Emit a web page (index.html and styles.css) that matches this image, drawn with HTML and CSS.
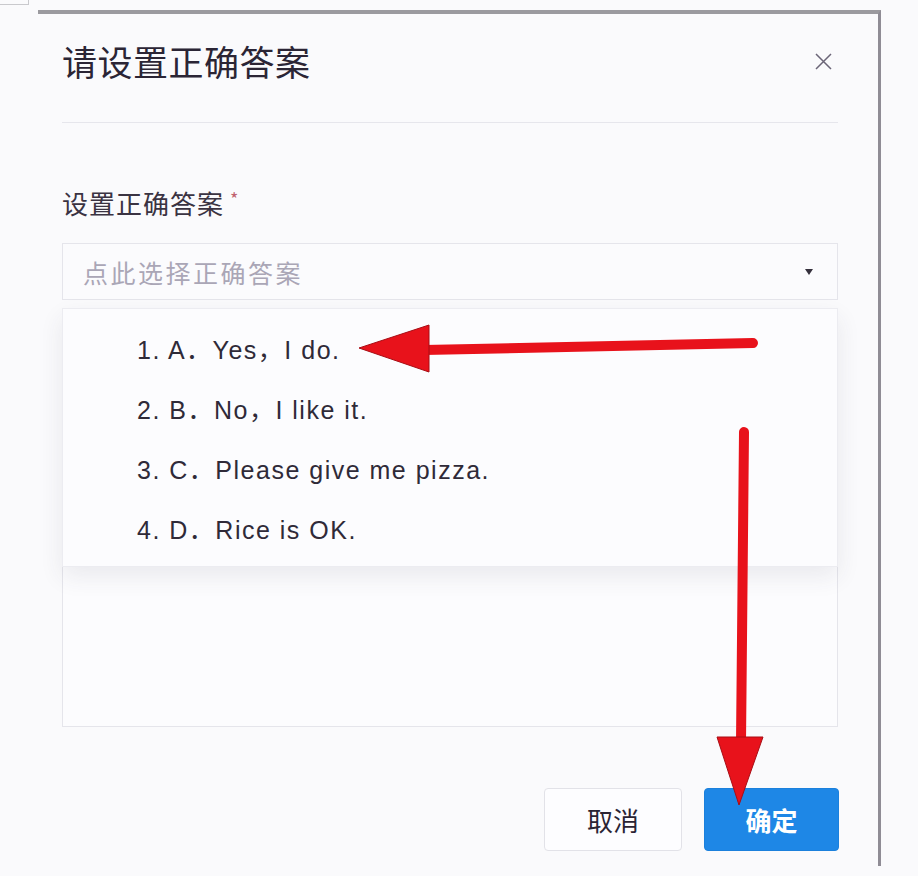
FILE: index.html
```html
<!DOCTYPE html>
<html lang="zh">
<head>
<meta charset="utf-8">
<title>请设置正确答案</title>
<link rel="stylesheet" href="styles.css">
</head>
<body>
<div class="corner-mark"></div>
<div class="modal">
  <div class="modal-header">
    <h1 class="modal-title">请设置正确答案</h1>
    <svg class="close-icon" width="17" height="17" viewBox="0 0 17 17"><path d="M1 1L16 16M16 1L1 16" stroke="#6b6577" stroke-width="1.5" fill="none"/></svg>
  </div>
  <div class="modal-body">
    <div class="field-label">设置正确答案<span class="required">*</span></div>
    <div class="select-wrap">
      <div class="select-box">
        <span class="placeholder">点此选择正确答案</span>
        <span class="caret"></span>
      </div>
      <ul class="dropdown">
        <li class="option">1. A．Yes，I do.</li>
        <li class="option">2. B．No，I like it.</li>
        <li class="option">3. C．Please give me pizza.</li>
        <li class="option">4. D．Rice is OK.</li>
      </ul>
    </div>
    <div class="textarea-box"></div>
  </div>
  <div class="modal-footer">
    <button class="btn btn-cancel">取消</button>
    <button class="btn btn-primary">确定</button>
  </div>
</div>
<svg class="annotations" width="918" height="876" viewBox="0 0 918 876">
  <line x1="753" y1="343" x2="424" y2="350" stroke="#e8121b" stroke-width="10" stroke-linecap="round"/>
  <polygon points="359,348 429,325 429,372" fill="#e8121b" stroke="#a80d14" stroke-width="1"/>
  <line x1="744" y1="432" x2="741" y2="742" stroke="#e8121b" stroke-width="10" stroke-linecap="round"/>
  <polygon points="717,737 763,737 739,805" fill="#e8121b" stroke="#a80d14" stroke-width="1"/>
</svg>
</body>
</html>
```
FILE: styles.css
```css
html, body {
  margin: 0;
  padding: 0;
}
body {
  background: #fafafc;
  font-family: "Noto Sans CJK SC", "Liberation Sans", sans-serif;
  color: #2b2535;
  width: 918px;
  height: 876px;
  overflow: hidden;
}
.corner-mark {
  position: absolute;
  left: 0;
  top: -1px;
  width: 28px;
  height: 5px;
  border-right: 1px solid #c9c9cd;
  border-bottom: 1px solid #c9c9cd;
}
.modal {
  box-sizing: border-box;
  width: 843px;
  margin: 10px 0 0 38px;
  padding: 26px 40px 15px 24px;
  border-top: 4px solid #9b9a9f;
  border-right: 3px solid #8f8c95;
  background: #fafafc;
}
.modal-header {
  display: flex;
  align-items: center;
  justify-content: space-between;
  padding-bottom: 40px;
  border-bottom: 1px solid #e6e6ec;
}
.modal-title {
  margin: 0;
  font-size: 35px;
  line-height: 42px;
  font-weight: 400;
  letter-spacing: 0.5px;
  color: #2b2535;
}
.close-icon {
  margin-right: 6px;
  display: block;
}
.modal-body {
  padding-top: 64px;
}
.field-label {
  font-size: 26px;
  line-height: 32px;
  letter-spacing: 1px;
  color: #3a3342;
}
.required {
  color: #c0636f;
  font-size: 18px;
  vertical-align: top;
  margin-left: 6px;
  line-height: 22px;
}
.select-wrap {
  position: relative;
  margin-top: 24px;
}
.select-box {
  box-sizing: border-box;
  height: 57px;
  display: flex;
  align-items: center;
  justify-content: space-between;
  padding: 0 24px 0 20px;
  border: 1px solid #e5e5eb;
  background: #fbfbfd;
}
.placeholder {
  font-size: 25px;
  letter-spacing: 2.5px;
  color: #aaa6b6;
}
.caret {
  width: 0;
  height: 0;
  border-left: 4px solid transparent;
  border-right: 4px solid transparent;
  border-top: 6px solid #35303c;
}
.dropdown {
  position: absolute;
  left: 0;
  right: 0;
  top: 65px;
  box-sizing: border-box;
  height: 259px;
  margin: 0;
  padding: 11px 0 8px 74px;
  list-style: none;
  background: #fcfcfe;
  border: 1px solid #ececf1;
  box-shadow: 0 10px 22px rgba(60, 60, 80, 0.09);
  z-index: 2;
}
.option {
  height: 60px;
  line-height: 60px;
  font-family: "Liberation Sans", "Noto Sans CJK SC", sans-serif;
  font-size: 25px;
  letter-spacing: 1.5px;
  color: #2f2a38;
  white-space: nowrap;
}
.textarea-box {
  box-sizing: border-box;
  height: 417px;
  margin-top: 10px;
  border: 1px solid #e5e5eb;
  background: #fcfcfe;
}
.modal-footer {
  display: flex;
  justify-content: flex-end;
  align-items: center;
  gap: 22px;
  margin-top: 61px;
  margin-right: -1px;
}
.btn {
  box-sizing: border-box;
  height: 63px;
  border-radius: 4px;
  font-family: "Noto Sans CJK SC", sans-serif;
  font-size: 26px;
  padding: 0;
  cursor: pointer;
}
.btn-cancel {
  width: 138px;
  background: #fdfdff;
  border: 1px solid #e2e2e8;
  color: #2a2434;
}
.btn-primary {
  width: 135px;
  background: #1e87e6;
  border: 1px solid #1b80dc;
  color: #ffffff;
  font-weight: 700;
}
.annotations {
  position: absolute;
  left: 0;
  top: 0;
  pointer-events: none;
  z-index: 5;
}
```
